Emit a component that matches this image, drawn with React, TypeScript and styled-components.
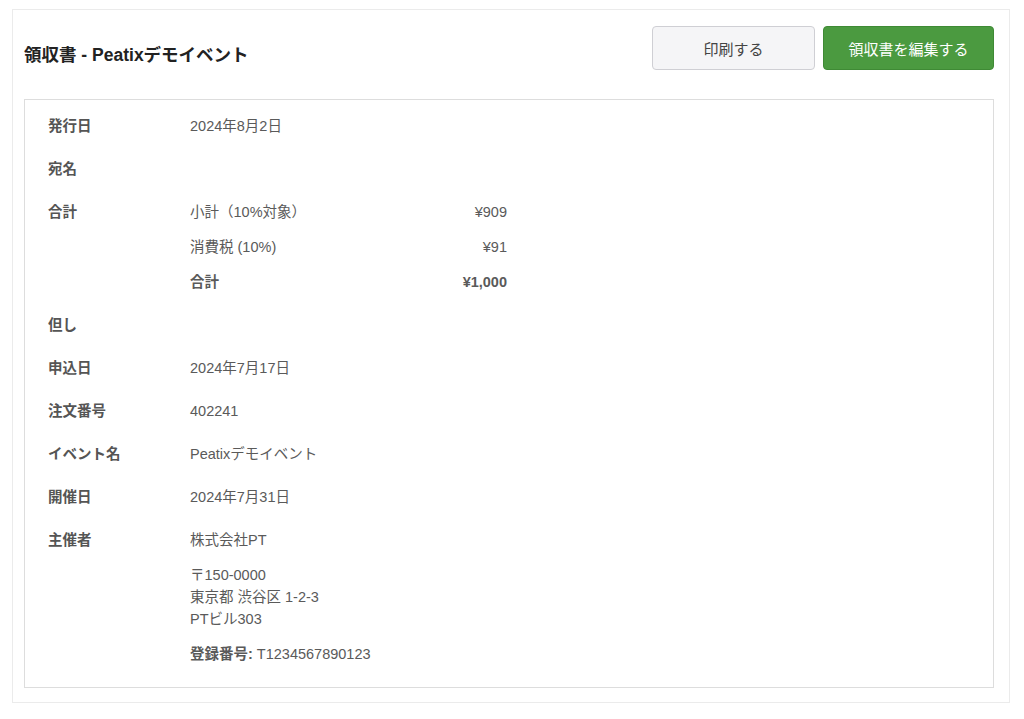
import React from 'react';
import styled, { createGlobalStyle } from 'styled-components';

const GlobalStyle = createGlobalStyle`
    body {
        margin: 0;
        background: #ffffff;
        font-family: "Liberation Sans", "Noto Sans CJK JP", sans-serif;
        color: #555555;
    }
`

const Page = styled.div`
    padding: 9px 14px 0 12px;
`

const Card = styled.div`
    border: 1px solid #ebebeb;
    padding: 0 15px 14px 11px;
`

const Header = styled.div`
    display: flex;
    justify-content: space-between;
    align-items: flex-start;
    padding-top: 16px;
    height: 73px;
`

const Title = styled.h1`
    margin: 18px 0 0 0;
    font-size: 17.5px;
    line-height: 22px;
    font-weight: bold;
    color: #222222;
`

const Botoes = styled.div`
    display: flex;
    gap: 8px;
`

const Botao = styled.button<{ $primary?: boolean }>`
    height: 44px;
    width: ${p => (p.$primary ? '171px' : '163px')};
    border-radius: 4px;
    font-family: "Liberation Sans", "Noto Sans CJK JP", sans-serif;
    font-size: 15px;
    cursor: pointer;
    border: 1px solid ${p => (p.$primary ? '#3f8a35' : '#cfcfd4')};
    background: ${p => (p.$primary ? '#4b9a40' : '#f5f5f7')};
    color: ${p => (p.$primary ? '#ffffff' : '#444444')};
`

const Detalhe = styled.div`
    border: 1px solid #dddddd;
    padding: 15px 23px 22px 23px;
    display: flex;
    flex-direction: column;
    gap: 21px;
    font-size: 14.5px;
    line-height: 22px;
`

const Linha = styled.div`
    display: grid;
    grid-template-columns: 142px 1fr;
`

const Rotulo = styled.div`
    font-weight: bold;
    color: #555555;
`

const Valor = styled.div`
    display: flex;
    flex-direction: column;
    gap: 13px;
    color: #5a5a5a;
`

const Soma = styled.div<{ $bold?: boolean }>`
    display: flex;
    justify-content: space-between;
    width: 317px;
    font-weight: ${p => (p.$bold ? 'bold' : 'normal')};
`

const Negrito = styled.span`
    font-weight: bold;
`

const linhasSimples = [
    ['但し', ''],
    ['申込日', '2024年7月17日'],
    ['注文番号', '402241'],
    ['イベント名', 'Peatixデモイベント'],
    ['開催日', '2024年7月31日'],
];

export default function App() {
    return (
        <Page>
            <GlobalStyle />
            <Card>
                <Header>
                    <Title>領収書 - Peatixデモイベント</Title>
                    <Botoes>
                        <Botao>印刷する</Botao>
                        <Botao $primary>領収書を編集する</Botao>
                    </Botoes>
                </Header>
                <Detalhe>
                    <Linha>
                        <Rotulo>発行日</Rotulo>
                        <Valor>2024年8月2日</Valor>
                    </Linha>
                    <Linha>
                        <Rotulo>宛名</Rotulo>
                        <Valor></Valor>
                    </Linha>
                    <Linha>
                        <Rotulo>合計</Rotulo>
                        <Valor>
                            <Soma><span>小計（10%対象）</span><span>¥909</span></Soma>
                            <Soma><span>消費税 (10%)</span><span>¥91</span></Soma>
                            <Soma $bold><span>合計</span><span>¥1,000</span></Soma>
                        </Valor>
                    </Linha>
                    {linhasSimples.map(([rotulo, valor]) => (
                        <Linha key={rotulo}>
                            <Rotulo>{rotulo}</Rotulo>
                            <Valor>{valor}</Valor>
                        </Linha>
                    ))}
                    <Linha>
                        <Rotulo>主催者</Rotulo>
                        <Valor>
                            <div>株式会社PT</div>
                            <div>
                                〒150-0000<br />
                                東京都 渋谷区 1-2-3<br />
                                PTビル303
                            </div>
                            <div><Negrito>登録番号:</Negrito> T1234567890123</div>
                        </Valor>
                    </Linha>
                </Detalhe>
            </Card>
        </Page>
    );
}
